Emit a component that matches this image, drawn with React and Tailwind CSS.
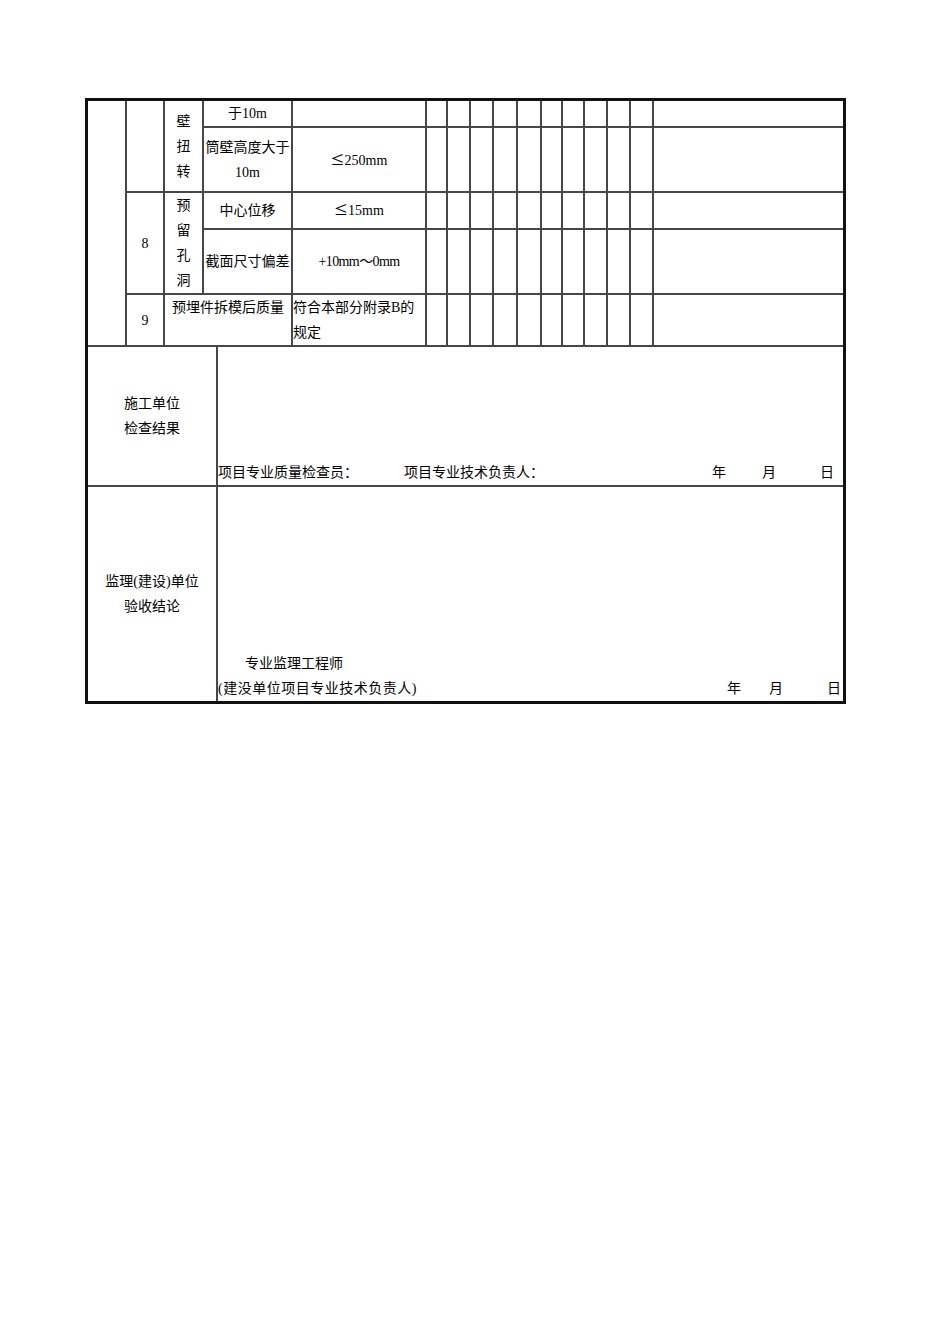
import React from "react";

const b = "border-2 border-[#474747] p-0";

function Smalls() {
  return (
    <>
      {Array.from({ length: 10 }).map((_, i) => (
        <td key={i} className={b}></td>
      ))}
      <td className={b}></td>
    </>
  );
}

export default function App() {
  return (
    <div className="w-[950px] min-h-[1344px] bg-white text-black">
      <div className="pl-[85px] pt-[98px]">
        <div className="w-[761px] border-[3px] border-[#111] text-[14px] leading-[25px] font-['Liberation_Serif','Noto_Sans_CJK_SC',serif]">
          <table className="table-fixed border-collapse border-hidden w-[755px]">
            <colgroup>
              <col className="w-[38px]" />
              <col className="w-[38px]" />
              <col className="w-[39px]" />
              <col className="w-[89px]" />
              <col className="w-[134px]" />
              <col className="w-[21px]" />
              <col className="w-[23px]" />
              <col className="w-[23px]" />
              <col className="w-[24px]" />
              <col className="w-[24px]" />
              <col className="w-[21px]" />
              <col className="w-[22px]" />
              <col className="w-[23px]" />
              <col className="w-[23px]" />
              <col className="w-[23px]" />
              <col className="w-[190px]" />
            </colgroup>
            <tbody>
              <tr className="h-[26px]">
                <td className={b} rowSpan={5}></td>
                <td className={b} rowSpan={2}></td>
                <td className={`${b} text-center`} rowSpan={2}>
                  <div>壁</div>
                  <div>扭</div>
                  <div>转</div>
                </td>
                <td className={`${b} text-center`}>于10m</td>
                <td className={b}></td>
                <Smalls />
              </tr>
              <tr className="h-[65px]">
                <td className={`${b} text-center`}>
                  <div>筒壁高度大于</div>
                  <div>10m</div>
                </td>
                <td className={`${b} text-center`}>
                  <span className="font-['Noto_Sans_CJK_JP',sans-serif]">≤</span>250mm
                </td>
                <Smalls />
              </tr>
              <tr className="h-[36px]">
                <td className={`${b} text-center`} rowSpan={2}>8</td>
                <td className={`${b} text-center`} rowSpan={2}>
                  <div>预</div>
                  <div>留</div>
                  <div>孔</div>
                  <div>洞</div>
                </td>
                <td className={`${b} text-center`}>中心位移</td>
                <td className={`${b} text-center`}>
                  <span className="font-['Noto_Sans_CJK_JP',sans-serif]">≤</span>15mm
                </td>
                <Smalls />
              </tr>
              <tr className="h-[64px]">
                <td className={`${b} text-center`}>截面尺寸偏差</td>
                <td className={`${b} text-center tracking-[-0.6px]`}>+10mm～0mm</td>
                <Smalls />
              </tr>
              <tr className="h-[51px]">
                <td className={`${b} text-center`}>9</td>
                <td className={`${b} text-center align-top`} colSpan={2}>
                  预埋件拆模后质量
                </td>
                <td className={`${b} text-left`}>
                  <div>符合本部分附录B的</div>
                  <div>规定</div>
                </td>
                <Smalls />
              </tr>
            </tbody>
          </table>

          <div className="flex h-[140px] border-t-2 border-[#474747]">
            <div className="w-[130px] shrink-0 border-r-2 border-[#474747] flex flex-col items-center justify-center text-center">
              <div>施工单位</div>
              <div>检查结果</div>
            </div>
            <div className="flex-1 flex flex-col justify-end">
              <div className="flex">
                <span>项目专业质量检查员：</span>
                <span className="ml-[46px]">项目专业技术负责人：</span>
                <span className="ml-auto">年</span>
                <span className="ml-[36px]">月</span>
                <span className="ml-[44px] mr-[9px]">日</span>
              </div>
            </div>
          </div>

          <div className="flex h-[216px] border-t-2 border-[#474747]">
            <div className="w-[130px] shrink-0 border-r-2 border-[#474747] flex flex-col items-center justify-center text-center">
              <div>监理(建设)单位</div>
              <div>验收结论</div>
            </div>
            <div className="flex-1 flex flex-col justify-end">
              <div className="pl-[27px]">专业监理工程师</div>
              <div className="flex">
                <span className="tracking-[0.5px]">(建没单位项目专业技术负责人)</span>
                <span className="ml-auto">年</span>
                <span className="ml-[28px]">月</span>
                <span className="ml-[44px] mr-[2px]">日</span>
              </div>
            </div>
          </div>
        </div>
      </div>
    </div>
  );
}
